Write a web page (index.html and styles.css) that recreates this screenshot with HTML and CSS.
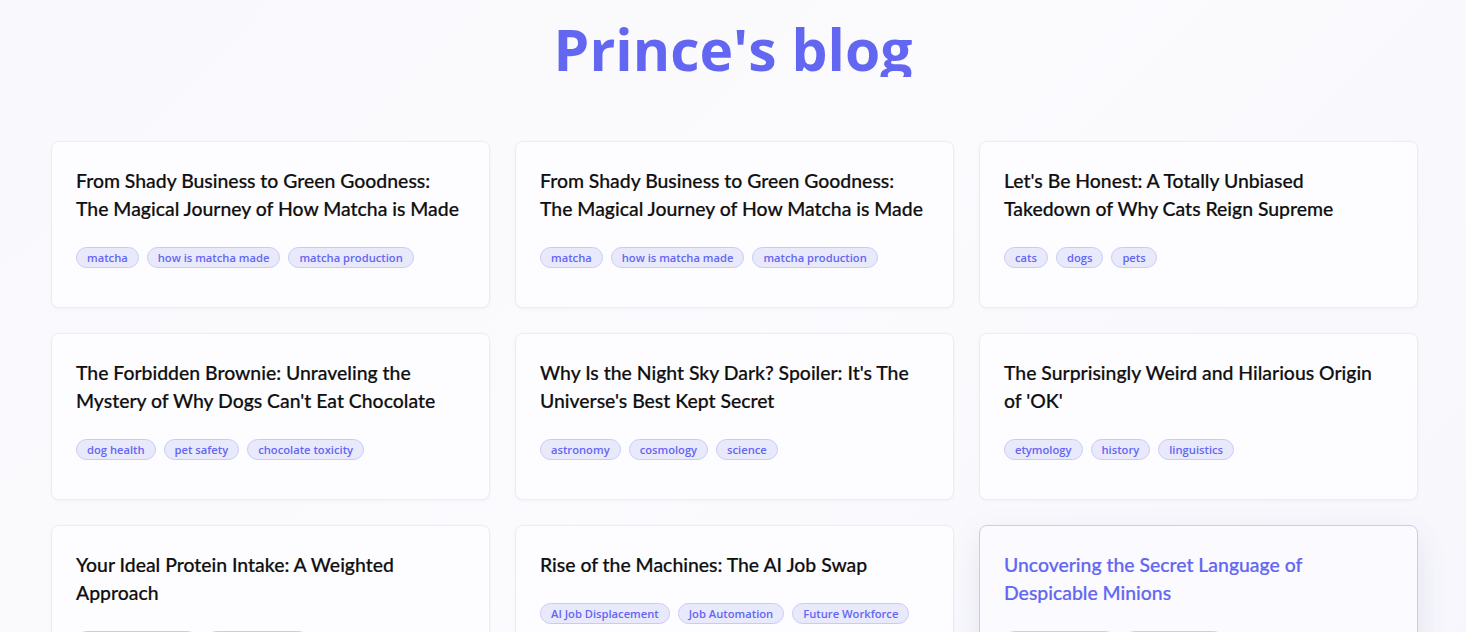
FILE: index.html
```html
<!DOCTYPE html>
<html lang="en">
<head>
<meta charset="utf-8">
<title>Prince's blog</title>
<link rel="stylesheet" href="styles.css">
</head>
<body>
<header class="masthead">
  <h1 class="site-title">Prince's blog</h1>
</header>
<main class="posts">
  <article class="card">
    <h2 class="card-title">From Shady Business to Green Goodness: The Magical Journey of How Matcha is Made</h2>
    <ul class="tags"><li class="tag">matcha</li><li class="tag">how is matcha made</li><li class="tag">matcha production</li></ul>
  </article>
  <article class="card">
    <h2 class="card-title">From Shady Business to Green Goodness: The Magical Journey of How Matcha is Made</h2>
    <ul class="tags"><li class="tag">matcha</li><li class="tag">how is matcha made</li><li class="tag">matcha production</li></ul>
  </article>
  <article class="card">
    <h2 class="card-title">Let's Be Honest: A Totally Unbiased Takedown of Why Cats Reign Supreme</h2>
    <ul class="tags"><li class="tag">cats</li><li class="tag">dogs</li><li class="tag">pets</li></ul>
  </article>
  <article class="card">
    <h2 class="card-title">The Forbidden Brownie: Unraveling the Mystery of Why Dogs Can't Eat Chocolate</h2>
    <ul class="tags"><li class="tag">dog health</li><li class="tag">pet safety</li><li class="tag">chocolate toxicity</li></ul>
  </article>
  <article class="card">
    <h2 class="card-title">Why Is the Night Sky Dark? Spoiler: It's The Universe's Best Kept Secret</h2>
    <ul class="tags"><li class="tag">astronomy</li><li class="tag">cosmology</li><li class="tag">science</li></ul>
  </article>
  <article class="card">
    <h2 class="card-title">The Surprisingly Weird and Hilarious Origin of 'OK'</h2>
    <ul class="tags"><li class="tag">etymology</li><li class="tag">history</li><li class="tag">linguistics</li></ul>
  </article>
  <article class="card">
    <h2 class="card-title">Your Ideal Protein Intake: A Weighted Approach</h2>
    <ul class="tags"><li class="tag">protein intake calc</li><li class="tag">nutrition guide</li></ul>
  </article>
  <article class="card">
    <h2 class="card-title">Rise of the Machines: The AI Job Swap</h2>
    <ul class="tags"><li class="tag">AI Job Displacement</li><li class="tag">Job Automation</li><li class="tag">Future Workforce</li></ul>
  </article>
  <article class="card card-active">
    <h2 class="card-title">Uncovering the Secret Language of Despicable Minions</h2>
    <ul class="tags"><li class="tag">minion language</li><li class="tag">despicable me</li></ul>
  </article>
</main>
</body>
</html>
```
FILE: styles.css
```css
* { box-sizing: border-box; }
html, body { margin: 0; }
body {
  min-height: 100vh;
  font-family: "Open Sans", "Noto Sans", sans-serif;
  background: linear-gradient(135deg, #f9f9fd 0%, #fbfbfe 50%, #f6f6fc 100%);
  color: #111;
}
.masthead {
  display: flex;
  justify-content: center;
  padding-top: 21px;
}
.site-title {
  margin: 0;
  font-family: "Open Sans", sans-serif;
  font-size: 57px;
  font-weight: 700;
  line-height: 56px;
  background: #6366f1;
  -webkit-background-clip: text;
  background-clip: text;
  color: transparent;
}
.posts {
  display: grid;
  grid-template-columns: repeat(3, 1fr);
  gap: 25px;
  padding: 64px 48px 40px 51px;
}
.card {
  padding: 25px 24px 39px 24px;
  background: #fdfdff;
  border: 1px solid #ececf6;
  border-radius: 8px;
  box-shadow: 0 1px 3px rgba(90, 90, 140, 0.06);
}
.card-active {
  border-color: #c9caf7;
  background: #fafaff;
  box-shadow: 0 10px 30px rgba(80, 80, 140, 0.12);
}
.card-title {
  margin: 0 0 24px;
  font-family: Lato, "Open Sans", sans-serif;
  font-size: 19.4px;
  font-weight: 500;
  line-height: 28px;
  color: #0f0f0f;
  -webkit-text-stroke: 0.2px #0f0f0f;
}
.card-active .card-title {
  color: #6366f1;
  -webkit-text-stroke-color: #6366f1;
}
.tags {
  display: flex;
  flex-wrap: wrap;
  gap: 8px;
  margin: 0;
  padding: 0;
  list-style: none;
}
.tag {
  padding: 0 10px;
  height: 21px;
  line-height: 19px;
  font-size: 11.2px;
  font-weight: 600;
  color: #6366f1;
  background: #e9e9fc;
  border: 1px solid #c9cbf6;
  border-radius: 999px;
}
```
